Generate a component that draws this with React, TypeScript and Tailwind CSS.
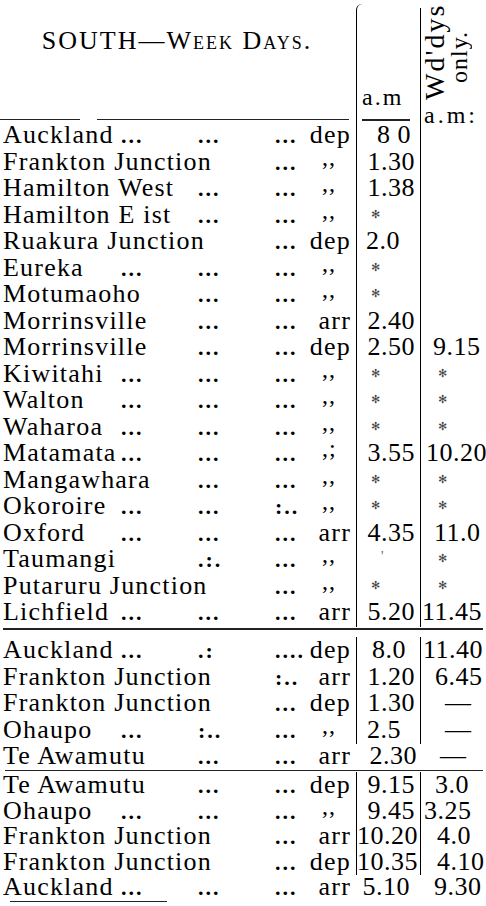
import React from "react";

type Row = {
  n: string;
  d1?: boolean;
  d2?: string;
  d3?: string;
  m?: "dep" | "arr" | "do" | "do2";
  t1?: React.ReactNode;
  c1?: string;
  t2?: React.ReactNode;
  c2?: string;
  b1?: boolean;
  b2?: boolean;
};

function Star() {
  return (
    <span className="inline-block [font-family:'DejaVu_Sans',sans-serif] text-[11px] leading-none text-[#444] -translate-y-[5px]">
      ✻
    </span>
  );
}

const R = "text-right pr-[5px]";
const S1 = "pl-[14px]";
const S2 = "pl-[17px]";
const DASH = "pl-[24px]";

const sec1: Row[] = [
  { n: "Auckland", d1: true, d2: "...", d3: "...", m: "dep", t1: "8 0", c1: "pl-[20px]" },
  { n: "Frankton Junction", d3: "...", m: "do", t1: "1.30", c1: R },
  { n: "Hamilton West", d2: "...", d3: "...", m: "do", t1: "1.38", c1: R },
  { n: "Hamilton E ist", d2: "...", d3: "...", m: "do", t1: <Star />, c1: S1 },
  { n: "Ruakura Junction", d3: "...", m: "dep", t1: "2.0", c1: "pl-[9px]" },
  { n: "Eureka", d1: true, d2: "...", d3: "...", m: "do", t1: <Star />, c1: S1 },
  { n: "Motumaoho", d2: "...", d3: "...", m: "do", t1: <Star />, c1: S1 },
  { n: "Morrinsville", d2: "...", d3: "...", m: "arr", t1: "2.40", c1: R },
  { n: "Morrinsville", d2: "...", d3: "...", m: "dep", t1: "2.50", c1: R, t2: "9.15", c2: "pl-[12px]" },
  { n: "Kiwitahi", d1: true, d2: "...", d3: "...", m: "do", t1: <Star />, c1: S1, t2: <Star />, c2: S2 },
  { n: "Walton", d1: true, d2: "...", d3: "...", m: "do", t1: <Star />, c1: S1, t2: <Star />, c2: S2 },
  { n: "Waharoa", d1: true, d2: "...", d3: "...", m: "do", t1: <Star />, c1: S1, t2: <Star />, c2: S2 },
  { n: "Matamata", d1: true, d2: "...", d3: "...", m: "do2", t1: "3.55", c1: R, t2: "10.20", c2: "pl-[5px] tracking-[-0.5px]" },
  { n: "Mangawhara", d2: "...", d3: "...", m: "do", t1: <Star />, c1: S1, t2: <Star />, c2: S2 },
  { n: "Okoroire", d1: true, d2: "...", d3: ":..", m: "do", t1: <Star />, c1: S1, t2: <Star />, c2: S2 },
  { n: "Oxford", d1: true, d2: "...", d3: "...", m: "arr", t1: "4.35", c1: R, t2: "11.0", c2: "pl-[13px]" },
  { n: "Taumangi", d2: ".:.", d3: "...", m: "do", t1: <span className="text-[14px] leading-none text-[#666] inline-block -translate-y-[6px]">'</span>, c1: "pl-[24px]", t2: <Star />, c2: S2 },
  { n: "Putaruru Junction", d3: "...", m: "do", t1: <Star />, c1: S1, t2: <Star />, c2: S2 },
  { n: "Lichfield", d1: true, d2: "...", d3: "...", m: "arr", t1: "5.20", c1: R, t2: "11.45", c2: "pl-[1px]" },
].map((r) => ({ ...r, b1: true, b2: true })) as Row[];

const sec2: Row[] = [
  { n: "Auckland", d1: true, d2: ".:", d3: "....", m: "dep", t1: "8.0", c1: "pl-[15px]", t2: "11.40", c2: "pl-[2px]", b1: true, b2: true },
  { n: "Frankton Junction", d3: ":..", m: "arr", t1: "1.20", c1: R, t2: "6.45", c2: "pl-[14px]", b1: true, b2: true },
  { n: "Frankton Junction", d3: "...", m: "dep", t1: "1.30", c1: R, t2: "—", c2: DASH, b1: true, b2: true },
  { n: "Ohaupo", d1: true, d2: ":..", d3: "...", m: "do", t1: "2.5", c1: "pl-[10px]", t2: "—", c2: DASH, b1: true, b2: true },
  { n: "Te Awamutu", d2: "...", d3: "...", m: "arr", t1: "2.30", c1: "text-right pr-[3px]", t2: "—", c2: "pl-[20px]" },
];

const sec3: Row[] = [
  { n: "Te Awamutu", d2: "...", d3: "...", m: "dep", t1: "9.15", c1: R, t2: "3.0", c2: "pl-[14px]", b1: true, b2: true },
  { n: "Ohaupo", d1: true, d2: "...", d3: "...", m: "do", t1: "9.45", c1: R, t2: "3.25", c2: "pl-[3px]", b1: true, b2: true },
  { n: "Frankton Junction", d3: "...", m: "arr", t1: "10.20", c1: "text-right pr-[4px]", t2: "4.0", c2: "pl-[16px]", b1: true, b2: true },
  { n: "Frankton Junction", d3: "...", m: "dep", t1: "10.35", c1: "text-right pr-[4px]", t2: "4.10", c2: "pl-[16px]", b1: true, b2: true },
  { n: "Auckland", d1: true, d2: "...", d3: "...", m: "arr", t1: "5.10", c1: "text-right pr-[10px]", t2: "9.30", c2: "pl-[14px]" },
];

function Dots({ t }: { t: string }) {
  return <span className="font-bold text-[22px] tracking-[2px]">{t}</span>;
}

function Mark({ m }: { m?: Row["m"] }) {
  if (!m) return null;
  if (m === "dep" || m === "arr") return <div className="text-right pr-[5px]">{m}</div>;
  return (
    <div className="pl-[16px]">
      <span className="inline-block leading-none -translate-y-[5px] text-[24px] tracking-[1px]">
        {m === "do" ? ",," : ",;"}
      </span>
    </div>
  );
}

function TRow({ r, tall }: { r: Row; tall: boolean }) {
  const h = tall ? "h-[26.5px] leading-[26.5px]" : "h-[25.5px] leading-[25.5px]";
  return (
    <div className={`grid grid-cols-[118px_78px_76px_34px_50px_64px_66px] ${h} whitespace-nowrap`}>
      <div className="pl-[3px]">{r.n}</div>
      <div className="pl-[3px]">{r.d1 ? <Dots t="..." /> : null}</div>
      <div className="pl-[2px]">{r.d2 ? <Dots t={r.d2} /> : null}</div>
      <div className="pl-[3px]">{r.d3 ? <Dots t={r.d3} /> : null}</div>
      <Mark m={r.m} />
      <div className={`${r.b1 ? "border-l-[1.5px] border-black" : ""} text-[26px] tracking-[0.5px] ${r.c1 ?? ""}`}>
        {r.t1}
      </div>
      <div className={`${r.b2 ? "border-l-[1.5px] border-black" : ""} text-[26px] tracking-[0.5px] ${r.c2 ?? ""}`}>
        {r.t2}
      </div>
    </div>
  );
}

export default function App() {
  return (
    <div className="w-[486px] h-[906px] overflow-hidden bg-white text-black [font-family:'Liberation_Serif',serif] text-[26px] tracking-[1.2px]">
      {/* header */}
      <div className="grid grid-cols-[356px_64px_66px] h-[122px]">
        <div className="flex flex-col">
          <div className="pt-[28px] text-center leading-[26px] text-[26px] tracking-[2px] [font-variant-caps:small-caps] pr-[2px]">
            SOUTH—Week Days.
          </div>
          <div className="mt-auto mb-[6px] flex items-center">
            <div className="ml-0 w-[80px] h-[1.5px] bg-[#222]" />
            <div className="ml-[17px] w-[252px] h-[1.5px] bg-[#222]" />
          </div>
        </div>
        <div className="mt-[4px] border-l-[1.5px] border-black rounded-tl-[6px] flex flex-col items-start justify-end">
          <div className="pl-[5px] text-[24px] leading-[24px] tracking-[2px]">a.m</div>
          <div className="ml-[5px] mt-[10px] mb-[5.5px] w-[48px] h-[1.5px] bg-[#222]" />
        </div>
        <div className="mt-[8px] border-l-[1.5px] border-black flex flex-col">
          <div className="-mt-[20px] h-[112px] flex justify-start pl-[1px]">
            <div className="[writing-mode:vertical-rl] rotate-180 text-start h-[112px] leading-[25px]">
              <span className="block text-[28px] tracking-[2px]">Wd'dys</span>
              <span className="block ps-[17px] text-[24px] tracking-[1px]">only.</span>
            </div>
          </div>
          <div className="mt-[4px] pl-[3px] text-[24px] leading-[22px] tracking-[3px]">a.m:</div>
        </div>
      </div>

      {sec1.map((r, i) => (
        <TRow key={"a" + i} r={r} tall />
      ))}
      <div className="h-[11.5px] pt-[2.5px]">
        <div className="ml-[3px] w-[480px] h-[1.5px] bg-[#222]" />
      </div>
      {sec2.map((r, i) => (
        <TRow key={"b" + i} r={r} tall />
      ))}
      <div className="h-[2.5px]">
        <div className="ml-[5px] w-[478px] h-[1.5px] bg-[#222]" />
      </div>
      {sec3.map((r, i) => (
        <TRow key={"c" + i} r={r} tall={false} />
      ))}
      <div className="mt-[1px] ml-[10px] w-[157px] h-[1.5px] bg-[#222]" />
    </div>
  );
}
